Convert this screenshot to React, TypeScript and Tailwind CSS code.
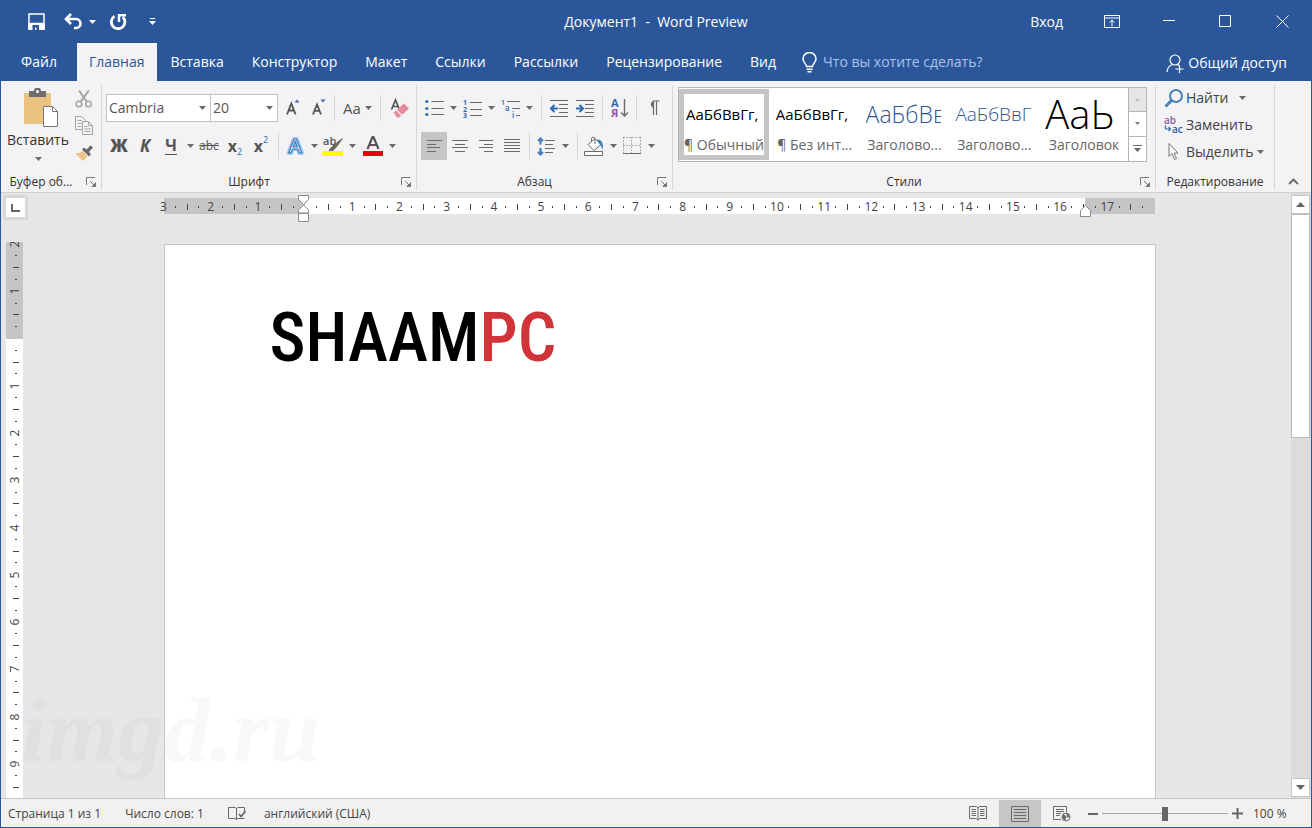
import type { ReactNode } from 'react';

function Caret({ className = 'text-[#6a6a6a]' }: { className?: string }) {
  return (
    <svg width="7" height="4" viewBox="0 0 7 4" className={`shrink-0 ${className}`} aria-hidden="true">
      <path d="M0 0h7L3.5 4z" fill="currentColor" />
    </svg>
  );
}

function DropArrow({ label }: { label: string }) {
  return (
    <button aria-label={label} className="flex h-7 w-3 items-center justify-center">
      <Caret />
    </button>
  );
}

function Tool({ label, children, active = false }: { label: string; children: ReactNode; active?: boolean }) {
  return (
    <button
      aria-label={label}
      aria-pressed={active}
      className={`flex h-7 w-[26px] shrink-0 items-center justify-center text-[#555] ${active ? 'bg-[#c5c5c5]' : ''}`}
    >
      {children}
    </button>
  );
}

function Sep({ className }: { className: string }) {
  return <span className={`h-[26px] w-px shrink-0 bg-[#d5d5d7] ${className}`} />;
}

function Group({
  label,
  width,
  launcher = true,
  children,
}: {
  label: string;
  width: string;
  launcher?: boolean;
  children: ReactNode;
}) {
  return (
    <section aria-label={label} className={`mt-1 mb-0.5 flex flex-col justify-between border-r border-[#d5d5d7] ${width}`}>
      <div>{children}</div>
      <div className="flex h-4 items-center">
        <span className="flex-1 text-center text-xs whitespace-nowrap text-[#333]">{label}</span>
        {launcher && (
          <button aria-label={`${label}: параметры`} className="flex w-5 items-center justify-end pr-1">
            <svg width="11" height="11" viewBox="0 0 11 11" fill="none" stroke="#777" aria-hidden="true">
              <path d="M.5 8V.5H9M4 4l5 5" />
              <path d="M10 5v5H5z" fill="#777" stroke="none" />
            </svg>
          </button>
        )}
      </div>
    </section>
  );
}

/* ---------- Title bar ---------- */

function TitleBar() {
  return (
    <header className="grid h-[43px] grid-cols-[1fr_auto_1fr] items-center text-white">
      <div className="flex items-center pl-[27px]">
        <button aria-label="Сохранить" className="w-[18px]">
          <svg width="17" height="17" viewBox="0 0 17 17" fill="none" stroke="#fff" strokeWidth="1.5" aria-hidden="true">
            <path d="M1 1h15v15H1z" />
            <path d="M1 10.500h15V16H1z" fill="#fff" />
            <path d="M4.500 12h6.500v5H8.500v-2.500H7V17H4.500z" fill="#2b579a" stroke="none" />
          </svg>
        </button>
        <button aria-label="Отменить" className="ml-[18px] w-[19px]">
          <svg width="19" height="17" viewBox="0 0 19 17" fill="none" stroke="#fff" strokeWidth="2.600" aria-hidden="true">
            <path d="M7 1 2 6l5 5M2.500 6H12a4.400 4.400 0 0 1 0 9h-2" />
          </svg>
        </button>
        <button aria-label="Список отмены" className="ml-1.5 flex w-2">
          <Caret className="text-white" />
        </button>
        <button aria-label="Повторить" className="ml-3 w-[18px]">
          <svg width="18" height="18" viewBox="0 0 18 18" fill="none" stroke="#fff" strokeWidth="2.800" aria-hidden="true">
            <path d="M5.500 3.200A6.800 6.800 0 1 0 13.800 4" />
            <path d="M10 9V2.200h7" strokeWidth="2.400" />
          </svg>
        </button>
        <button aria-label="Настройка панели быстрого доступа" className="ml-[22px] w-2">
          <svg width="7" height="7" viewBox="0 0 7 7" aria-hidden="true">
            <path d="M1 0h5v1H1zM0 3h7L3.500 7z" fill="#fff" />
          </svg>
        </button>
      </div>
      <h1 className="text-sm whitespace-pre">Документ1  -  Word Preview</h1>
      <div className="flex items-center justify-end text-sm">
        <button className="mr-5">Вход</button>
        <button aria-label="Параметры отображения ленты" className="flex w-[57px] justify-center">
          <svg width="16" height="13" viewBox="0 0 16 13" fill="none" stroke="#fff" aria-hidden="true">
            <path d="M.5.5h15v12H.5zM.5 3h15M8 11V5.500M5.500 7.500 8 5l2.500 2.500" />
          </svg>
        </button>
        <button aria-label="Свернуть" className="flex w-[57px] justify-center">
          <svg width="12" height="13" viewBox="0 0 12 13" stroke="#fff" aria-hidden="true">
            <path d="M0 5.500h12" />
          </svg>
        </button>
        <button aria-label="Развернуть" className="flex w-[57px] justify-center">
          <svg width="13" height="13" viewBox="0 0 13 13" fill="none" stroke="#fff" aria-hidden="true">
            <path d="M.5.5h11v11H.5z" />
          </svg>
        </button>
        <button aria-label="Закрыть" className="flex w-[57px] justify-center">
          <svg width="13" height="13" viewBox="0 0 13 13" fill="none" stroke="#fff" aria-hidden="true">
            <path d="m.5.5 12 12M12.500.5l-12 12" />
          </svg>
        </button>
      </div>
    </header>
  );
}

/* ---------- Tabs ---------- */

const TABS = ['Вставка', 'Конструктор', 'Макет', 'Ссылки', 'Рассылки', 'Рецензирование', 'Вид'];

function Tabs() {
  return (
    <nav className="flex h-[38px] items-stretch text-sm text-white">
      <button className="w-[76px]">Файл</button>
      <button className="bg-[#f3f2f4] px-3 text-[#2b579a]">Главная</button>
      <div className="flex">
        {TABS.map((t) => (
          <button key={t} className="px-3.5">
            {t}
          </button>
        ))}
      </div>
      <label className="ml-3 flex flex-1 items-center gap-1.5">
        <svg width="15" height="21" viewBox="0 0 15 21" fill="none" stroke="#fff" strokeWidth="1.500" aria-hidden="true">
          <path d="M4.500 14.500c0-2.500-3.500-4-3.500-7.500a6.500 6.500 0 0 1 13 0c0 3.500-3.500 5-3.500 7.500z" />
          <path d="M4.500 17.200h6M5.500 19.700h4" />
        </svg>
        <input
          aria-label="Что вы хотите сделать?"
          placeholder="Что вы хотите сделать?"
          className="min-w-0 flex-1 bg-transparent outline-none placeholder:text-[#a9c3ea]"
        />
      </label>
      <button className="mr-6 flex items-center gap-1 pt-0.5">
        <svg width="18" height="19" viewBox="0 0 18 19" fill="none" stroke="#fff" strokeWidth="1.200" aria-hidden="true">
          <circle cx="9" cy="6" r="5" />
          <path d="M1 18c.3-4 2.500-6.500 5.500-7.500M11.500 10.500l1.500 1M13.500 11v8M9.500 15h8" />
        </svg>
        Общий доступ
      </button>
    </nav>
  );
}

/* ---------- Ribbon groups ---------- */

function Clipboard() {
  return (
    <Group label="Буфер об..." width="w-[101px] shrink-0">
      <div className="flex">
        <button className="flex w-[74px] flex-col items-center pt-[3px] text-sm text-[#333]">
          <svg width="36" height="40" viewBox="0 0 36 40" className="ml-1.5" aria-hidden="true">
            <path d="M1 5h27v31H1z" fill="#eac282" />
            <path d="M6 3h5a3.500 3.500 0 0 1 7 0h5v6H6z" fill="#6d6d6d" />
            <circle cx="14.500" cy="3.500" r="1.500" fill="#fff" />
            <path d="M20.500 18.500h9l5 5v15h-14z" fill="#fff" stroke="#777" />
            <path d="M29.500 18.500v5h5" fill="none" stroke="#777" />
          </svg>
          <span className="leading-6">Вставить</span>
          <span className="flex h-3.5 items-center">
            <Caret />
          </span>
        </button>
        <div className="flex flex-col items-center">
          <button aria-label="Вырезать" className="flex h-[27px] w-5 items-center">
            <svg width="18" height="19" viewBox="0 0 18 19" fill="none" stroke="#a5a5a5" strokeWidth="1.500" aria-hidden="true">
              <circle cx="4" cy="15" r="2.800" />
              <circle cx="13.500" cy="15" r="2.800" />
              <path d="M4 1.500 11.800 12.800M13.800 1.500 5.500 12.800" strokeWidth="2" />
            </svg>
          </button>
          <button aria-label="Копировать" className="flex h-[27px] w-5 items-center">
            <svg width="18" height="19" viewBox="0 0 18 19" fill="#f3f2f4" stroke="#a5a5a5" aria-hidden="true">
              <path d="M.5.5h6l4 4v9H.5zM2.500 4.500h4M2.500 7.500h4M2.500 10.500h4" />
              <path d="M7.500 5.500h6l4 4v9h-10zM13.500 5.500v4h4M9.500 10.500h3M9.500 13h6M9.500 15.500h6" />
            </svg>
          </button>
          <button aria-label="Формат по образцу" className="flex h-[27px] w-5 items-center">
            <svg width="18" height="16" viewBox="0 0 18 16" aria-hidden="true">
              <path d="M1 8c3 .5 5-.5 6.500-2l5 5L8 16 1 9z" fill="#eac282" />
              <path d="M7 4.500 9 2.500l2.500 2L15.500.5l2.500 2L14 7l2 2-2 2.500z" fill="#6a6a6a" />
            </svg>
          </button>
        </div>
      </div>
    </Group>
  );
}

function FontGroup() {
  return (
    <Group label="Шрифт" width="w-[315px] shrink-0">
      <div className="mt-[9px] flex h-7 items-center pl-1">
        <label className="relative flex h-7 w-[105px] items-center border border-[#c3c3c5] bg-white">
          <select aria-label="Шрифт" className="h-full w-full appearance-none px-0.5 text-sm text-[#555] outline-none">
            <option>Cambria</option>
          </select>
          <span className="pointer-events-none absolute right-1">
            <Caret />
          </span>
        </label>
        <label className="relative -ml-px flex h-7 w-[68px] items-center border border-[#c3c3c5] bg-white">
          <select aria-label="Размер шрифта" className="h-full w-full appearance-none px-0.5 text-sm text-[#555] outline-none">
            <option>20</option>
          </select>
          <span className="pointer-events-none absolute right-1">
            <Caret />
          </span>
        </label>
        <span className="ml-0.5 flex">
          <Tool label="Увеличить размер шрифта">
            <svg width="14" height="18" viewBox="0 0 14 18" aria-hidden="true">
              <path d="M1 15.500 5.300 4.500 9.600 15.500M2.600 11.500H8" fill="none" stroke="#555" strokeWidth="1.800" />
              <path d="M8.500 3.500h5L11 .5z" fill="#3a6ea8" />
            </svg>
          </Tool>
          <Tool label="Уменьшить размер шрифта">
            <svg width="14" height="18" viewBox="0 0 14 18" aria-hidden="true">
              <path d="M1 15.500 5 5.500 9 15.500M2.500 11.800H7.600" fill="none" stroke="#555" strokeWidth="1.800" />
              <path d="M8.500.5h5L11 3.500z" fill="#3a6ea8" />
            </svg>
          </Tool>
        </span>
        <Sep className="ml-0.5" />
        <button aria-label="Регистр" className="ml-2 flex items-center gap-1 text-[15px] text-[#555]">
          Aa <Caret />
        </button>
        <Sep className="ml-2" />
        <span className="ml-1.5">
          <Tool label="Удалить форматирование">
            <svg width="20" height="21" viewBox="0 0 20 21" aria-hidden="true">
              <path d="M1.500 11.500 5.500 2 9 10.500M3 8.500h5" fill="none" stroke="#555" strokeWidth="1.700" />
              <path d="m3.500 14.500 10.500-9 5 5L9 19.500H7z" fill="#e58a99" />
              <path d="m6.500 12 5.500 5.500" stroke="#f3f2f4" strokeWidth="1.200" />
            </svg>
          </Tool>
        </span>
      </div>
      <div className="mt-2.5 flex h-7 items-center pl-1">
        <Tool label="Полужирный">
          <span className="text-[17px] font-extrabold">Ж</span>
        </Tool>
        <Tool label="Курсив">
          <span className="text-[17px] font-bold italic">К</span>
        </Tool>
        <Tool label="Подчеркнутый">
          <span className="border-b border-[#555] text-base leading-[17px] font-bold">Ч</span>
        </Tool>
        <DropArrow label="Вид подчеркивания" />
        <Tool label="Зачеркнутый">
          <span className="text-xs line-through">abc</span>
        </Tool>
        <Tool label="Подстрочный знак">
          <span className="flex items-end">
            <b className="text-base">x</b>
            <span className="text-[9px] leading-3 text-[#2f6cad]">2</span>
          </span>
        </Tool>
        <Tool label="Надстрочный знак">
          <span className="flex items-start">
            <b className="text-base">x</b>
            <span className="text-[9px] leading-3 text-[#2f6cad]">2</span>
          </span>
        </Tool>
        <Sep className="mr-[3px] ml-1" />
        <Tool label="Текстовые эффекты">
          <svg width="20" height="22" viewBox="0 0 20 22" strokeLinejoin="round" aria-hidden="true">
            <g fontSize="20" fontWeight="600" textAnchor="middle">
              <text x="10" y="18" fill="none" stroke="#a9cdf0" strokeWidth="4">A</text>
              <text x="10" y="18" fill="#fff" stroke="#3a78b8" strokeWidth="1.200">A</text>
            </g>
          </svg>
        </Tool>
        <DropArrow label="Выбор эффекта" />
        <Tool label="Цвет выделения">
          <svg width="22" height="22" viewBox="0 0 22 22" aria-hidden="true">
            <text x="1" y="10" fontSize="11" fontWeight="600" fill="#555">ab</text>
            <path d="M20.500 3.500 12 10l-3 3-2.500 3.500 4.500-1.200 2.500-2.300z" fill="#666" stroke="#666" />
            <path d="M0 16h21v5H0z" fill="#ffff00" />
          </svg>
        </Tool>
        <DropArrow label="Выбор цвета выделения" />
        <span className="ml-0.5 flex">
          <Tool label="Цвет текста">
            <svg width="20" height="22" viewBox="0 0 20 22" aria-hidden="true">
              <path d="M4.500 14 9.500 2h1l5 12M6.500 10h7" fill="none" stroke="#555" strokeWidth="2.200" />
              <path d="M0 16h20v5H0z" fill="#e8000d" />
            </svg>
          </Tool>
          <DropArrow label="Выбор цвета текста" />
        </span>
      </div>
    </Group>
  );
}

function Lines({ d }: { d: string }) {
  return (
    <svg width="18" height="18" viewBox="0 0 18 18" stroke="#6a6a6a" fill="none" aria-hidden="true">
      <path d={d} />
    </svg>
  );
}

function Paragraph() {
  return (
    <Group label="Абзац" width="w-64 shrink-0">
      <div className="mt-[9px] flex h-7 items-center pl-1">
        <Tool label="Маркеры">
          <svg width="19" height="18" viewBox="0 0 19 18" aria-hidden="true">
            <path d="M6.500 2.500H19M6.500 9.500H19M6.500 15.500H19" stroke="#6a6a6a" />
            <g fill="#2f6cad">
              <circle cx="1.800" cy="2.500" r="1.600" />
              <circle cx="1.800" cy="9.500" r="1.600" />
              <circle cx="1.800" cy="15.500" r="1.600" />
            </g>
          </svg>
        </Tool>
        <DropArrow label="Вид маркеров" />
        <Tool label="Нумерация">
          <svg width="19" height="19" viewBox="0 0 19 19" aria-hidden="true">
            <path d="M7 3.500h12M7 10.500h12M7 16.500h12" stroke="#6a6a6a" />
            <g fontSize="7" fontWeight="700" fill="#2f6cad">
              <text x="0" y="6">1</text>
              <text x="0" y="12.500">2</text>
              <text x="0" y="19">3</text>
            </g>
          </svg>
        </Tool>
        <DropArrow label="Вид нумерации" />
        <Tool label="Многоуровневый список">
          <svg width="19" height="19" viewBox="0 0 19 19" aria-hidden="true">
            <path d="M6 2.500h13M11 9.500h8M15 16.500h4" stroke="#6a6a6a" />
            <g fontSize="8" fontWeight="600" fill="#2f6cad">
              <text x="0" y="6" fontSize="7">1</text>
              <text x="4" y="12">a</text>
              <text x="11" y="19">i</text>
            </g>
          </svg>
        </Tool>
        <DropArrow label="Вид списка" />
        <Sep className="mr-1 ml-1.5" />
        <Tool label="Уменьшить отступ">
          <svg width="18" height="17" viewBox="0 0 18 17" fill="none" stroke="#6a6a6a" aria-hidden="true">
            <path d="M0 .5h18M9 4.500h9M9 8.500h9M9 12.500h9M0 16.500h18" />
            <path d="M1 8.500h7M4.500 5 1 8.500 4.500 12" stroke="#2f6cad" strokeWidth="2" />
          </svg>
        </Tool>
        <Tool label="Увеличить отступ">
          <svg width="18" height="17" viewBox="0 0 18 17" fill="none" stroke="#6a6a6a" aria-hidden="true">
            <path d="M0 .5h18M9 4.500h9M9 8.500h9M9 12.500h9M0 16.500h18" />
            <path d="M0 8.500h7M3.500 5 7 8.500 3.500 12" stroke="#2f6cad" strokeWidth="2" />
          </svg>
        </Tool>
        <Sep className="mx-1" />
        <Tool label="Сортировка">
          <svg width="18" height="20" viewBox="0 0 18 20" fill="none" aria-hidden="true">
            <text x="0" y="9" fontSize="11" fontWeight="700" fill="#2f6cad">А</text>
            <text x="0" y="19" fontSize="11" fontWeight="700" fill="#9350a8">Я</text>
            <path d="M13.500 1v17M10 14.500l3.500 3.500 3.500-3.500" stroke="#6a6a6a" strokeWidth="1.400" />
          </svg>
        </Tool>
        <Sep className="mr-1 ml-[3px]" />
        <Tool label="Отобразить все знаки">
          <svg width="12" height="16" viewBox="0 0 12 16" aria-hidden="true">
            <path d="M5 1h6.500M5.500 1v14M8.500 1v14" stroke="#6a6a6a" strokeWidth="1.200" />
            <path d="M5.500.5a4 4 0 0 0 0 7.500z" fill="#6a6a6a" />
          </svg>
        </Tool>
      </div>
      <div className="mt-2.5 flex h-7 items-center pl-1">
        <Tool label="По левому краю" active>
          <Lines d="M2 3.500h15M2 7.500h9M2 10.500h13M2 14.500h9" />
        </Tool>
        <Tool label="По центру">
          <Lines d="M1 3.500h16M4 7.500h10M1 10.500h16M4 14.500h10" />
        </Tool>
        <Tool label="По правому краю">
          <Lines d="M2 3.500h14M7 7.500h9M2 10.500h14M7 14.500h9" />
        </Tool>
        <Tool label="По ширине">
          <Lines d="M1 2.500h16M1 5.500h16M1 8.500h16M1 11.500h16M1 14.500h16" />
        </Tool>
        <Sep className="mr-[3px] ml-1" />
        <Tool label="Интервал">
          <svg width="18" height="19" viewBox="0 0 18 19" fill="none" stroke="#6a6a6a" aria-hidden="true">
            <path d="M8 3.500h10M8 7.500h8M8 11.500h10M8 15.500h8" />
            <path d="M3.500 1.500v6M1 4l2.500-2.500L6 4M3.500 11v6.500M1 15l2.500 2.500L6 15" stroke="#4a80b8" strokeWidth="2.200" />
          </svg>
        </Tool>
        <DropArrow label="Выбор интервала" />
        <Sep className="mr-[3px] ml-1.5" />
        <Tool label="Заливка">
          <svg width="22" height="20" viewBox="0 0 22 20" fill="none" aria-hidden="true">
            <path d="m5 8.500 7-6 6 6-7 6z" fill="#fff" stroke="#6a6a6a" />
            <path d="M8.500 6V2.500a1.800 1.800 0 0 1 3.500 0V8" stroke="#6a6a6a" />
            <path d="M13.500 3.500c5 0 7.500 3 6 10.500-1-3-2-5-2.500-5.500z" fill="#3f7fbf" />
            <path d="M1.500 15.500h18v4h-18z" fill="#fff" stroke="#6a6a6a" />
          </svg>
        </Tool>
        <DropArrow label="Выбор заливки" />
        <Tool label="Границы">
          <svg width="18" height="18" viewBox="0 0 18 18" fill="none" stroke="#6a6a6a" aria-hidden="true">
            <path d="M.5.5h17M.5.5V16M17.500.5V16M8.500.5V16M.5 8.500h17" strokeDasharray="1 2" />
            <path d="M0 16.500h18" />
          </svg>
        </Tool>
        <DropArrow label="Выбор границ" />
      </div>
    </Group>
  );
}

const STYLES = [
  { sample: 'АаБбВвГг,', name: '¶ Обычный', look: 'text-[15px] text-black' },
  { sample: 'АаБбВвГг,', name: '¶ Без инт...', look: 'text-[15px] text-black' },
  { sample: 'АаБбВв', name: 'Заголово...', look: 'text-[23px] font-light text-[#2e5597]' },
  { sample: 'АаБбВвГ', name: 'Заголово...', look: 'text-[19px] font-light text-[#2e5597]' },
  { sample: 'АаЬ', name: 'Заголовок', look: 'text-[40px] font-light text-black' },
];

function Styles() {
  return (
    <Group label="Стили" width="min-w-0 flex-1">
      <div className="mt-0.5 mr-2 ml-[5px] flex h-[75px] border border-[#b5b5b7] bg-white">
        <div className="grid min-w-0 flex-1 grid-cols-5 py-px">
          {STYLES.map((s, i) => (
            <button
              key={i}
              aria-pressed={i === 0}
              className={`flex min-w-0 flex-col overflow-hidden border-[5px] ${i === 0 ? 'border-[#c5c5c5]' : 'border-transparent'}`}
            >
              <span className="w-full px-0.5">
                <span className={`flex h-10 items-center overflow-hidden whitespace-nowrap ${s.look}`}>{s.sample}</span>
              </span>
              <span className={`w-full text-sm leading-[22px] whitespace-nowrap text-[#666] ${i === 0 ? '' : 'pl-0.5'}`}>{s.name}</span>
            </button>
          ))}
        </div>
        <div className="grid w-[18px] grid-rows-3 divide-y divide-[#b5b5b7] border-l border-[#b5b5b7]">
          <button aria-label="Стили вверх" className="flex items-center justify-center bg-[#e6e6e6]">
            <svg width="5" height="3" viewBox="0 0 5 3" aria-hidden="true">
              <path d="M0 3h5L2.500 0z" fill="#bbb" />
            </svg>
          </button>
          <button aria-label="Стили вниз" className="flex items-center justify-center">
            <svg width="5" height="3" viewBox="0 0 5 3" aria-hidden="true">
              <path d="M0 0h5L2.500 3z" fill="#777" />
            </svg>
          </button>
          <button aria-label="Все стили" className="flex items-center justify-center">
            <svg width="9" height="8" viewBox="0 0 9 8" aria-hidden="true">
              <path d="M0 0h9v1H0zM1 3h7L4.500 7z" fill="#666" />
            </svg>
          </button>
        </div>
      </div>
    </Group>
  );
}

function Editing() {
  return (
    <Group label="Редактирование" width="w-[119px] shrink-0" launcher={false}>
      <div className="-mt-px flex flex-col pl-2 text-sm text-[#444]">
        <button className="flex h-[27px] items-center">
          <svg width="22" height="20" viewBox="0 0 22 20" fill="none" stroke="#4a80b8" aria-hidden="true">
            <circle cx="12" cy="8" r="6" strokeWidth="2" />
            <path d="m7.500 12.500-6 6" strokeWidth="3" />
          </svg>
          <span className="mr-2.5">Найти</span>
          <Caret />
        </button>
        <button className="flex h-[27px] items-center">
          <svg width="22" height="22" viewBox="0 0 22 22" aria-hidden="true">
            <text x="0" y="10" fontSize="10" fontWeight="600" fill="#8a5a9a">ab</text>
            <text x="8" y="19" fontSize="10" fontWeight="600" fill="#2f5c9d">ac</text>
            <path d="M1.500 11.500v3.500h5M4.500 13l2 2-2 2" fill="none" stroke="#2f6cad" strokeWidth="1.200" />
          </svg>
          Заменить
        </button>
        <button className="flex h-[27px] items-center">
          <svg width="22" height="19" viewBox="0 0 22 19" aria-hidden="true">
            <path d="M5 1.500v13l3-3 2.500 6 2-1-2.500-5.500h4z" fill="#fff" stroke="#777" />
          </svg>
          <span className="mr-1">Выделить</span>
          <Caret />
        </button>
      </div>
    </Group>
  );
}

/* ---------- Rulers ---------- */

function Marks({ from, to, vertical = false }: { from: number; to: number; vertical?: boolean }) {
  const marks = Array.from({ length: (to - from) * 4 + 1 }, (_, i) => i);
  return (
    <>
      {marks.map((i) => {
        const value = Math.abs(from + i / 4);
        const hidden = value === 0 || i === marks.length - 1;
        const box = vertical ? 'h-0 w-full' : 'h-full w-0';
        let mark: ReactNode = null;
        if (!hidden && i % 4 === 0) {
          mark = <span className={`shrink-0 leading-none ${vertical ? '-rotate-90' : ''}`}>{value}</span>;
        } else if (!hidden && i % 4 === 2) {
          mark = <span className={`shrink-0 bg-[#444] ${vertical ? 'h-px w-1.5' : 'h-1.5 w-px'}`} />;
        } else if (!hidden) {
          mark = <span className={`shrink-0 bg-[#444] ${vertical ? 'h-px w-0.5' : 'h-0.5 w-px'}`} />;
        }
        return (
          <span key={i} className={`flex items-center justify-center ${box}`}>
            {mark}
          </span>
        );
      })}
    </>
  );
}

function HorizontalRuler() {
  return (
    <div className="relative mt-[5px] grid h-4 shrink-0 text-xs text-[#444]">
      <div className="col-start-1 row-start-1 grid grid-cols-[6fr_33fr_3fr]">
        <span className="bg-[#c5c5c5]" />
        <span className="bg-white" />
        <span className="bg-[#c5c5c5]" />
      </div>
      <div className="col-start-1 row-start-1 flex items-center justify-between pt-px">
        <Marks from={-3} to={18} />
      </div>
      <svg width="11" height="28" viewBox="0 0 11 28" fill="#fff" stroke="#8a8a8a" className="absolute -top-[3px] left-[14.286%] -ml-[7px]" aria-hidden="true">
        <path d="M.5.5h10v4l-5 5-5-5zM.5 18v-3l5-5 5 5v3zM.5 18.500h10v8H.5z" />
      </svg>
      <svg width="11" height="12" viewBox="0 0 11 12" fill="#fff" stroke="#8a8a8a" className="absolute top-[7px] left-[92.857%] -ml-[5px]" aria-hidden="true">
        <path d="M.5 11.500v-6l5-5 5 5v6z" />
      </svg>
    </div>
  );
}

function VerticalRuler() {
  return (
    <div className="mt-[22px] ml-[5px] min-h-0 w-[17px] flex-1 overflow-hidden bg-white text-xs text-[#444]">
      <div className="grid">
        <div className="col-start-1 row-start-1 h-[97px] bg-[#c5c5c5]" />
        <div className="col-start-1 row-start-1 mt-0.5 flex h-[567px] flex-col justify-between pl-0.5">
          <Marks from={-2} to={10} vertical />
        </div>
      </div>
    </div>
  );
}

function Workspace() {
  return (
    <main className="relative flex min-h-0 flex-1 bg-[#e6e6e6]">
      <div className="flex w-[27px] shrink-0 flex-col">
        <button aria-label="Выбор табуляции" className="mt-0.5 ml-0.5 flex size-[25px] shrink-0 items-center justify-center border-[3px] border-[#d8d8da] bg-white">
          <svg width="9" height="9" viewBox="0 0 9 9" fill="none" stroke="#666" strokeWidth="2" aria-hidden="true">
            <path d="M1 1v7h8" />
          </svg>
        </button>
        <VerticalRuler />
      </div>
      <div className="flex min-w-0 flex-1 flex-col overflow-hidden">
        <div className="mx-auto flex min-h-0 w-[992px] max-w-full flex-1 flex-col">
          <HorizontalRuler />
          <article className="mt-[30px] flex-1 border border-b-0 border-[#c6c6c6] bg-white px-[105px] pt-[53px]">
            <p className="font-['Roboto_Condensed',Roboto,sans-serif] text-[68px] leading-20 font-medium text-black">
              SHAAM<span className="text-[#d13438]">PC</span>
            </p>
          </article>
        </div>
      </div>
      <div className="flex w-5 shrink-0 flex-col items-start bg-[#dcdcdd] pt-0.5 pb-px">
        <button aria-label="Прокрутить вверх" className="flex size-[19px] shrink-0 items-center justify-center border border-[#c6c6c6] bg-white">
          <svg width="9" height="5" viewBox="0 0 9 5" aria-hidden="true">
            <path d="M0 5h9L4.500 0z" fill="#666" />
          </svg>
        </button>
        <div className="h-56 w-[19px] border border-[#b8b8ba] bg-white" />
        <button aria-label="Прокрутить вниз" className="mt-auto flex size-[19px] shrink-0 items-center justify-center border border-[#c6c6c6] bg-white">
          <svg width="9" height="5" viewBox="0 0 9 5" aria-hidden="true">
            <path d="M0 0h9L4.500 5z" fill="#666" />
          </svg>
        </button>
      </div>
      <span className="pointer-events-none absolute bottom-0 left-5 font-['Liberation_Serif',serif] text-[92px] leading-[136px] font-bold text-[#504070]/4 italic">
        imgd.ru
      </span>
    </main>
  );
}

/* ---------- Status bar ---------- */

function StatusBar() {
  return (
    <footer className="flex h-[29px] shrink-0 items-center border-t border-[#c6c6c6] bg-[#f1f1f2] pt-px pr-[22px] pl-[7px] text-xs text-[#444]">
      <button>Страница 1 из 1</button>
      <button className="ml-6">Число слов: 1</button>
      <button aria-label="Проверка правописания" className="ml-6">
        <svg width="18" height="15" viewBox="0 0 18 15" fill="none" stroke="#6a6a6a" aria-hidden="true">
          <path d="M8.500 13.500V2.500L7 1.500H.5v11h6.500l1.500 1 1.500-1h6.500M8.500 2.500l1.500-1h6.500V5" />
          <path d="m11 8 2.200 2.500L17.500 5" strokeWidth="1.800" />
        </svg>
      </button>
      <button className="ml-[18px]">английский (США)</button>
      <div className="ml-auto flex h-full items-center">
        <button aria-label="Режим чтения" className="flex h-full w-[42px] items-center justify-center">
          <svg width="18" height="15" viewBox="0 0 18 15" fill="none" stroke="#6a6a6a" aria-hidden="true">
            <path d="M9 14.500V2L7.500.5H.5v12h7L9 14l1.500-1.500h7V.5h-7L9 2M2.500 3.500H7M2.500 5.500H7M2.500 7.500H7M2.500 9.500H7M11 3.500h4.500M11 5.500h4.500M11 7.500h4.500M11 9.500h4.500" />
          </svg>
        </button>
        <button aria-label="Разметка страницы" aria-pressed="true" className="flex h-full w-[42px] items-center justify-center bg-[#c6c6c8]">
          <svg width="18" height="16" viewBox="0 0 18 16" fill="none" stroke="#6a6a6a" aria-hidden="true">
            <path d="M.5.5h17v15H.5zM3 3.500h12M3 6.500h12M3 9.500h12M3 12.500h12" />
          </svg>
        </button>
        <button aria-label="Веб-документ" className="flex h-full w-[42px] items-center justify-center">
          <svg width="18" height="16" viewBox="0 0 18 16" fill="none" stroke="#6a6a6a" aria-hidden="true">
            <path d="M8 13.500H.5V.5h13V6M3 3.500h8M3 5.500h8M3 7.500h5M3 9.500h4" />
            <circle cx="13" cy="11" r="4" />
            <path d="M10 9c2 0 3 1 3 2s-1 1-1 3c-2-1-3-3-2-5zM13.500 7.500l3 2.500-1.500 1.500z" fill="#6a6a6a" />
          </svg>
        </button>
        <button aria-label="Уменьшить масштаб" className="ml-0.5 flex w-4 justify-center">
          <svg width="10" height="12" viewBox="0 0 10 12" stroke="#666" strokeWidth="2" aria-hidden="true">
            <path d="M0 6h10" />
          </svg>
        </button>
        <input
          type="range"
          aria-label="Масштаб"
          min={0}
          max={200}
          defaultValue={100}
          className="mx-px h-3.5 w-[126px] appearance-none bg-[linear-gradient(#a5a5a5,#a5a5a5)] bg-[length:100%_1px] bg-center bg-no-repeat [&::-webkit-slider-thumb]:h-3.5 [&::-webkit-slider-thumb]:w-1.5 [&::-webkit-slider-thumb]:appearance-none [&::-webkit-slider-thumb]:bg-[#666]"
        />
        <button aria-label="Увеличить масштаб" className="flex w-4 justify-center">
          <svg width="11" height="11" viewBox="0 0 11 11" stroke="#666" strokeWidth="2" aria-hidden="true">
            <path d="M0 5.500h11M5.500 0v11" />
          </svg>
        </button>
        <button className="ml-2 w-9 text-left whitespace-nowrap">100 %</button>
      </div>
    </footer>
  );
}

export default function App() {
  return (
    <div className="flex h-screen min-h-[480px] flex-col overflow-hidden bg-[#2b579a] px-px pb-px font-['Open_Sans','Noto_Sans',sans-serif]">
      <TitleBar />
      <Tabs />
      <div className="flex h-28 shrink-0 items-stretch border-b border-[#d0d0d2] bg-[#f3f2f4]">
        <Clipboard />
        <FontGroup />
        <Paragraph />
        <Styles />
        <Editing />
        <button aria-label="Свернуть ленту" className="flex w-9 shrink-0 items-end justify-center pb-[7px]">
          <svg width="11" height="7" viewBox="0 0 11 7" fill="none" stroke="#666" strokeWidth="1.800" aria-hidden="true">
            <path d="m1 6 4.500-4.500L10 6" />
          </svg>
        </button>
      </div>
      <Workspace />
      <StatusBar />
    </div>
  );
}
